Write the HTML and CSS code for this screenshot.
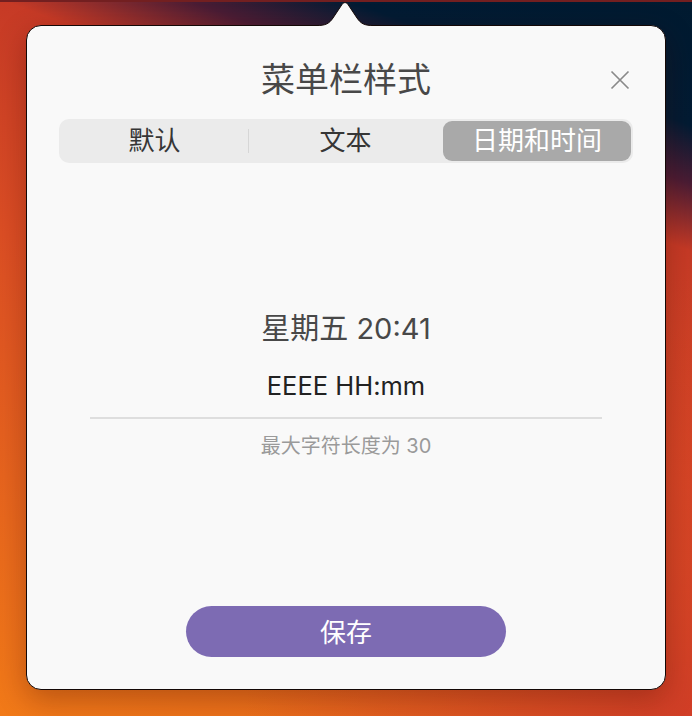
FILE: index.html
```html
<!DOCTYPE html>
<html lang="zh-CN">
<head>
<meta charset="utf-8">
<title>菜单栏样式</title>
<link rel="stylesheet" href="styles.css">
</head>
<body>
<div class="popover">
  <svg class="arrow" width="56" height="26" viewBox="0 0 56 26" aria-hidden="true">
    <path class="arrow-fill" d="M0,24.5 C8,24.5 12,23 16,17 L25,3.5 C26.5,1 29.5,1 31,3.5 L40,17 C44,23 48,24.5 56,24.5 L56,26 L0,26 Z"/>
    <path class="arrow-line" d="M0,24.5 C8,24.5 12,23 16,17 L25,3.5 C26.5,1 29.5,1 31,3.5 L40,17 C44,23 48,24.5 56,24.5"/>
  </svg>
  <header class="header">
    <span></span>
    <h1 class="title">菜单栏样式</h1>
    <button class="close" aria-label="关闭">
      <svg width="20" height="20" viewBox="0 0 20 20"><path d="M1.5 1.5 L18.5 18.5 M18.5 1.5 L1.5 18.5"/></svg>
    </button>
  </header>
  <div class="segmented">
    <div class="seg seg-a">默认</div>
    <div class="divider"></div>
    <div class="seg seg-b">文本</div>
    <div class="divider hidden"></div>
    <div class="seg seg-c active">日期和时间</div>
  </div>
  <div class="preview">星期五 20:41</div>
  <div class="field">EEEE HH:mm</div>
  <div class="hint">最大字符长度为 30</div>
  <button class="save">保存</button>
</div>
</body>
</html>
```

FILE: styles.css
```css
html {
  background:
    linear-gradient(#731f20, #731f20) 0 0 / 100% 2px no-repeat,
    radial-gradient(circle at 100% 100%, rgba(205, 55, 40, 0.85) 0, rgba(205, 55, 40, 0) 45%),
    linear-gradient(200deg, #001a30 0%, #021b33 13%, #4a1c34 19%, #c63a26 26%, #dc4e24 50%, #f27a18 100%);
  height: 716px;
}

body {
  margin: 0;
  height: 716px;
  box-sizing: border-box;
  padding: 25px 0 0 26px;
  overflow: hidden;
  font-family: "Inter", "Noto Sans CJK SC", sans-serif;
}

.popover {
  position: relative;
  width: 640px;
  height: 665px;
  box-sizing: border-box;
  background: #f9f9f9;
  border: 1px solid #140806;
  border-radius: 15px;
  padding: 32px 32px;
  display: flex;
  flex-direction: column;
  box-shadow: 0 10px 30px rgba(60, 10, 0, 0.3);
}

.arrow {
  position: absolute;
  top: -25px;
  left: 290px;
  display: block;
}

.arrow-fill {
  fill: #f9f9f9;
}

.arrow-line {
  fill: none;
  stroke: #140806;
  stroke-width: 1;
}

.header {
  display: grid;
  grid-template-columns: 1fr auto 1fr;
  align-items: center;
  height: 40px;
}

.title {
  margin: 0;
  font-family: "Noto Sans CJK SC", sans-serif;
  font-size: 34px;
  font-weight: 400;
  line-height: 40px;
  color: #484848;
  padding-bottom: 3px;
}

.close {
  justify-self: end;
  margin-right: 3px;
  width: 20px;
  height: 20px;
  padding: 0;
  border: 0;
  background: none;
  display: block;
}

.close svg {
  display: block;
}

.close path {
  stroke: #8a8a8a;
  stroke-width: 1.7;
  fill: none;
}

.segmented {
  margin-top: 21px;
  height: 44px;
  box-sizing: border-box;
  padding: 2px;
  display: flex;
  align-items: stretch;
  background: #ebebeb;
  border-radius: 10px;
}

.seg {
  display: flex;
  align-items: center;
  justify-content: center;
  font-family: "Noto Sans CJK SC", sans-serif;
  font-size: 26px;
  color: #363636;
  border-radius: 9px;
  padding-bottom: 5px;
  box-sizing: border-box;
}

.seg-a {
  flex: 0 0 187px;
}

.seg-b {
  flex: 0 0 193px;
}

.seg-c {
  flex: 0 0 188px;
}

.seg.active {
  background: #a9a9a9;
  color: #ffffff;
}

.divider {
  width: 1px;
  height: 24px;
  align-self: center;
  background: #d6d6d6;
}

.divider.hidden {
  background: transparent;
}

.preview {
  margin-top: 146px;
  text-align: center;
  font-size: 29px;
  line-height: 40px;
  color: #484848;
}

.field {
  margin: 19px auto 0;
  width: 512px;
  box-sizing: border-box;
  text-align: center;
  font-size: 25.5px;
  line-height: 36px;
  color: #222222;
  padding-bottom: 13px;
  border-bottom: 2px solid #dedede;
}

.hint {
  margin-top: 13px;
  text-align: center;
  font-size: 20px;
  line-height: 28px;
  color: #9a9a9a;
}

.save {
  margin: auto auto 0;
  width: 320px;
  height: 51px;
  border: 0;
  border-radius: 26px;
  background: #7d6bb3;
  color: #ffffff;
  font-family: "Noto Sans CJK SC", sans-serif;
  font-size: 26px;
  padding: 0 0 3px;
}
```
